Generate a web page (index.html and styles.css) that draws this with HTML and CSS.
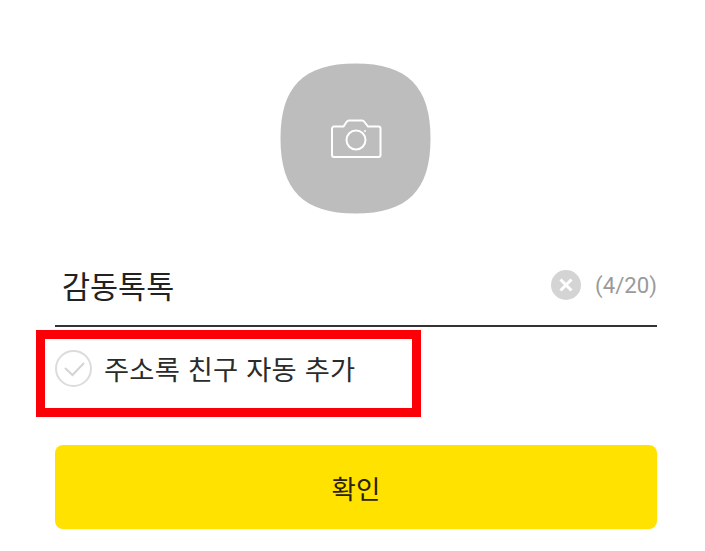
FILE: index.html
```html
<!DOCTYPE html>
<html lang="ko">
<head>
<meta charset="utf-8">
<title>감동톡톡</title>
<link rel="stylesheet" href="styles.css">
</head>
<body>
<main class="page">
  <div class="avatar-wrap">
    <svg class="avatar" width="151" height="151" viewBox="0 0 151 151">
      <path class="squircle" d="M75.500 0.500C127.500 0.500 150.500 23.500 150.500 75.500C150.500 127.500 127.500 150.500 75.500 150.500C23.500 150.500 0.500 127.500 0.500 75.500C0.500 23.500 23.500 0.500 75.500 0.500Z"/>
      <g class="cam" transform="translate(51 55)">
        <path d="M1 10.500A2 2 0 0 1 3 8.500H12.500L15.500 4C16 3.300 16.800 2.500 18 2.500H31C32.200 2.500 33 3.300 33.500 4L37 8.500H47.500A2 2 0 0 1 49.500 10.500V37A2 2 0 0 1 47.500 39H3A2 2 0 0 1 1 37Z"/>
        <circle cx="25" cy="22" r="9.500"/>
        <circle class="dot" cx="34" cy="13" r="1"/>
      </g>
    </svg>
  </div>
  <div class="field">
    <span class="name">감동톡톡</span>
    <svg class="clear" width="30" height="30" viewBox="0 0 30 30">
      <circle class="clear-bg" cx="15" cy="15" r="15"/>
      <path class="clear-x" d="M9.500 9.500L20.500 20.500M20.500 9.500L9.500 20.500"/>
    </svg>
    <span class="count">(4/20)</span>
  </div>
  <div class="option">
    <svg class="check" width="37" height="37" viewBox="0 0 37 37">
      <circle class="check-ring" cx="18.500" cy="18.500" r="17.500"/>
      <path class="check-mark" d="M10 18L17.500 25L29 13"/>
    </svg>
    <span class="option-label">주소록 친구 자동 추가</span>
    <div class="highlight"></div>
  </div>
  <button class="confirm" type="button">확인</button>
</main>
</body>
</html>
```

FILE: styles.css
```css
* { box-sizing: border-box; }
html, body { margin: 0; padding: 0; background: #fff; }
body {
  width: 705px;
  height: 551px;
  overflow: hidden;
  font-family: "Noto Sans CJK KR", "Roboto", sans-serif;
  color: #222;
}
.page { padding: 63px 48px 0 55px; display: flex; flex-direction: column; }
.avatar-wrap { display: flex; justify-content: center; height: 151px; padding-right: 1px; }
.avatar { display: block; }
.squircle { fill: #bdbdbd; }
.cam path, .cam circle { fill: none; stroke: #fff; stroke-width: 2; }
.cam .dot { fill: #fff; stroke: none; }
.field {
  margin-top: 48px;
  height: 65px;
  display: flex;
  align-items: center;
  border-bottom: 2px solid #333;
  padding: 0 0 17px 7px;
}
.name { font-size: 30.500px; font-weight: 400; line-height: 40px; flex: 1; color: #222; }
.clear { display: block; margin-right: 14px; }
.clear-bg { fill: #d4d4d4; }
.clear-x { stroke: #fff; stroke-width: 3; fill: none; }
.count { font-family: "Roboto", sans-serif; font-size: 22.200px; color: #9a9a9a; }
.option {
  position: relative;
  height: 85px;
  display: flex;
  align-items: center;
  padding-bottom: 3px;
}
.check { display: block; margin-right: 12px; }
.check-ring { fill: none; stroke: #dcdcdc; stroke-width: 2; }
.check-mark { fill: none; stroke: #d4d4d4; stroke-width: 2; }
.option-label { font-size: 27.300px; font-weight: 400; letter-spacing: 0.200px; color: #2b2b2b; }
.highlight {
  position: absolute;
  left: -19px;
  top: 3px;
  width: 385px;
  height: 87px;
  border: 9px solid #fb0007;
  pointer-events: none;
}
.confirm {
  margin-top: 33px;
  height: 84px;
  width: 602px;
  border: 0;
  border-radius: 8px;
  background: #ffe200;
  font-family: inherit;
  font-size: 26.500px;
  font-weight: 400;
  color: #2a2200;
  padding: 0;
}
```
